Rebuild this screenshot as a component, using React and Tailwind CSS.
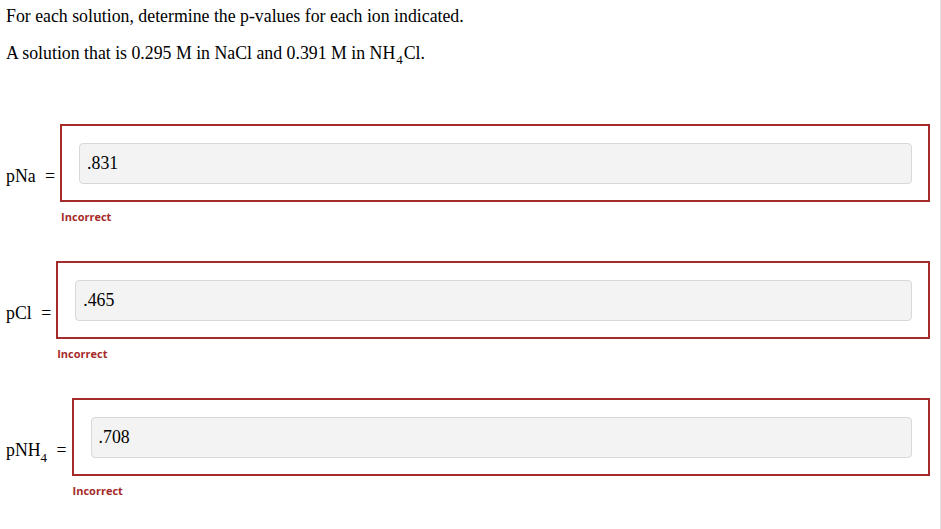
import React from "react";

const rows = [
  { key: "na", label: <>pNa</>, value: ".831" },
  { key: "cl", label: <>pCl</>, value: ".465" },
  {
    key: "nh4",
    label: (
      <>
        pNH<span className="relative top-[6px] text-[13px] leading-none">4</span>
      </>
    ),
    value: ".708",
  },
];

function AnswerRow({ label, value }) {
  return (
    <div className="flex h-[137px] items-start">
      <div className="mt-[42px] shrink-0 whitespace-nowrap leading-[20px]">
        {label} <span className="ml-[5px]">=</span>
      </div>
      <div className="ml-[5px] flex-1">
        <div className="border-2 border-[#a52a2a] pt-[17px] pr-[16px] pb-[16px] pl-[17px]">
          <div className="flex h-[41px] items-center rounded-[4px] border border-[#d8d8d8] bg-[#f3f3f3] pl-[7px]">
            {value}
          </div>
        </div>
        <div
          className="mt-[7px] ml-[1px] text-[11px] font-bold leading-[15px] text-[#a52a2a]"
          style={{ fontFamily: '"Open Sans", "Liberation Sans", sans-serif' }}
        >
          Incorrect
        </div>
      </div>
    </div>
  );
}

export default function App() {
  return (
    <div
      className="h-[529px] w-[941px] overflow-hidden border-r border-[#e2e2e2] bg-white pr-[10px] pl-[6px] text-[17.8px] text-black"
      style={{ fontFamily: '"Liberation Serif", "Times New Roman", serif' }}
    >
      <p className="pt-[6px] leading-[20px]">
        For each solution, determine the p-values for each ion indicated.
      </p>
      <p className="mt-[17px] leading-[20px]">
        A solution that is 0.295 M in NaCl and 0.391 M in NH
        <span className="relative top-[5px] mx-[1px] text-[13px] leading-none">4</span>
        Cl.
      </p>
      <div className="mt-[61px]">
        {rows.map((r) => (
          <AnswerRow key={r.key} label={r.label} value={r.value} />
        ))}
      </div>
    </div>
  );
}
